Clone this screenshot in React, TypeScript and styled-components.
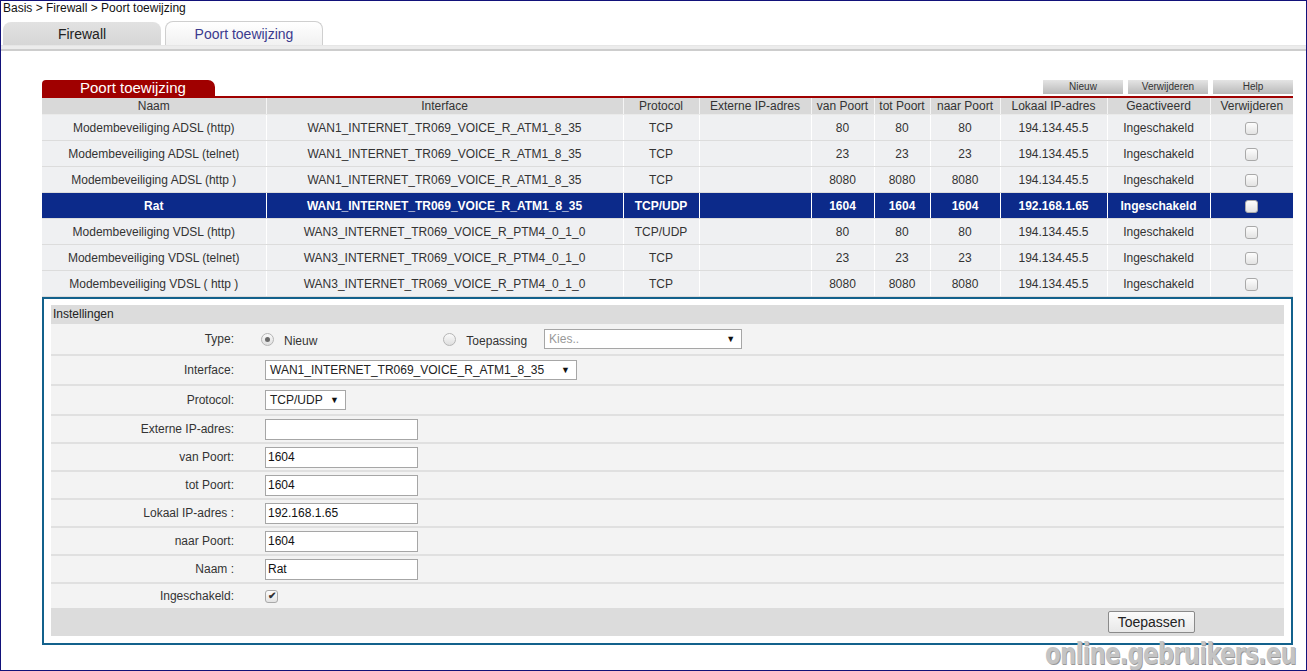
import React from "react";
import styled, { createGlobalStyle } from "styled-components";

const GlobalStyle = createGlobalStyle`
  html, body {
    margin: 0;
    padding: 0;
    background: #fff;
  }
  body {
    font-family: "Liberation Sans", Arial, sans-serif;
    font-size: 12px;
    color: #333;
  }
`;

const Frame = styled.div`
  position: relative;
  width: 1307px;
  height: 671px;
  box-sizing: border-box;
  border: 1px solid #12127a;
  overflow: hidden;
  background: #fff;
`;

const Breadcrumb = styled.div`
  padding: 0 2px;
  height: 15px;
  line-height: 14px;
  font-size: 12px;
  color: #111;
`;

const TabBar = styled.div`
  display: flex;
  align-items: flex-end;
  gap: 4px;
  padding: 4px 0 0 2px;
  height: 25px;
  border-bottom: 1px solid #e6e6e6;
`;

const Tab = styled.div<{ $active?: boolean }>`
  width: 158px;
  height: ${(p) => (p.$active ? "24px" : "23px")};
  box-sizing: border-box;
  display: flex;
  align-items: center;
  justify-content: center;
  font-size: 14px;
  border-radius: 8px 8px 0 0;
  color: ${(p) => (p.$active ? "#3b3b8e" : "#222")};
  background: ${(p) =>
    p.$active
      ? "linear-gradient(#ffffff, #f1f1f1)"
      : "linear-gradient(#e2e2e2, #d6d6d6)"};
  border: ${(p) => (p.$active ? "1px solid #cfcfcf" : "none")};
  border-bottom: none;
`;

const TabLine = styled.div`
  height: 3px;
  background: #ececec;
  border-bottom: 2px solid #cdcdcd;
`;

const Content = styled.div`
  padding: 29px 13px 0 41px;
`;

const TitleRow = styled.div`
  display: flex;
  align-items: flex-end;
  justify-content: space-between;
  border-bottom: 2px solid #a00000;
`;

const TitleTab = styled.div`
  width: 173px;
  height: 16px;
  background: #a00000;
  color: #fff;
  font-size: 15px;
  line-height: 16px;
  border-radius: 4px 7px 0 0;
  padding-left: 38px;
  box-sizing: border-box;
  white-space: nowrap;
`;

const ActionGroup = styled.div`
  display: flex;
  gap: 5px;
  padding-bottom: 2px;
`;

const ActionButton = styled.div`
  width: 80px;
  height: 14px;
  line-height: 14px;
  text-align: center;
  font-size: 10px;
  color: #333;
  background: linear-gradient(#e4e4e4, #b9b9b9);
`;

const Table = styled.table`
  width: 1251px;
  border-collapse: collapse;
  table-layout: fixed;
  font-size: 12px;
`;

const HeadCell = styled.th`
  height: 16px;
  padding: 0;
  font-weight: normal;
  color: #333;
  background: #d9d9d9;
  border-right: 1px solid #f4f4f4;
  border-bottom: 1px solid #eaeaea;
  text-align: center;
  &:last-child {
    border-right: none;
  }
`;

const Row = styled.tr<{ $selected?: boolean }>`
  background: ${(p) => (p.$selected ? "#0c2a8a" : "#eff0f2")};
  color: ${(p) => (p.$selected ? "#fff" : "#333")};
  font-weight: ${(p) => (p.$selected ? "bold" : "normal")};
`;

const Cell = styled.td`
  height: 25px;
  padding: 0;
  text-align: center;
  border-right: 1px solid #fff;
  border-bottom: 1px solid #dcdcdc;
  &:last-child {
    border-right: none;
  }
`;

const Box = styled.span`
  display: inline-flex;
  align-items: center;
  justify-content: center;
  width: 11px;
  height: 11px;
  border: 1px solid #a9a9a9;
  border-radius: 3px;
  background: linear-gradient(#fdfdfd, #e3e3e3);
  vertical-align: middle;
  font-size: 10px;
  line-height: 1;
  color: #333;
  font-weight: bold;
`;

const Settings = styled.div`
  border: 2px solid #13618c;
  padding: 6px 7px 7px 7px;
`;

const SettingsHeader = styled.div`
  height: 19px;
  line-height: 19px;
  padding-left: 2px;
  background: #dcdcdc;
  color: #222;
`;

const FormRow = styled.div<{ $h: number }>`
  display: grid;
  grid-template-columns: 183px 1fr;
  column-gap: 31px;
  align-items: center;
  box-sizing: border-box;
  height: ${(p) => p.$h}px;
  background: #f3f3f3;
  & + & {
    border-top: 2px solid #e0e0e0;
  }
`;

const Label = styled.div`
  text-align: right;
  color: #333;
`;

const Field = styled.div`
  display: flex;
  align-items: center;
`;

const Radio = styled.span<{ $checked?: boolean }>`
  display: inline-flex;
  align-items: center;
  justify-content: center;
  width: 11px;
  height: 11px;
  border-radius: 50%;
  border: 1px solid #b5b5b5;
  background: linear-gradient(#fafafa, #dedede);
  margin: 0 10px 0 -4px;
  &::after {
    content: "";
    width: 5px;
    height: 5px;
    border-radius: 50%;
    background: ${(p) => (p.$checked ? "#6a6a6a" : "transparent")};
  }
`;

const RadioText = styled.span<{ $gap?: number }>`
  margin-right: ${(p) => p.$gap ?? 0}px;
  padding-top: 3px;
`;

const Select = styled.div<{ $w: number; $muted?: boolean }>`
  display: flex;
  align-items: center;
  justify-content: space-between;
  box-sizing: border-box;
  width: ${(p) => p.$w}px;
  height: 20px;
  padding: 0 6px 0 4px;
  background: #fff;
  border: 1px solid #a6a6a6;
  color: ${(p) => (p.$muted ? "#999" : "#222")};
`;

const Arrow = styled.span`
  font-size: 9px;
  color: #111;
`;

const TextInput = styled.div`
  box-sizing: border-box;
  width: 153px;
  height: 21px;
  line-height: 19px;
  padding: 0 2px;
  background: #fff;
  border: 1px solid #a6a6a6;
  color: #111;
`;

const Footer = styled.div`
  display: flex;
  justify-content: flex-end;
  align-items: center;
  height: 28px;
  padding-right: 89px;
  background: #dcdcdc;
`;

const ApplyButton = styled.button`
  width: 87px;
  height: 22px;
  padding: 0;
  font-family: "Liberation Sans", Arial, sans-serif;
  font-size: 14px;
  color: #222;
  background: linear-gradient(#fbfbfb, #e8e8e8);
  border: 1px solid #8a8a8a;
  border-radius: 2px;
`;

const Watermark = styled.div`
  position: absolute;
  right: 10px;
  bottom: 4px;
  font-family: "DejaVu Sans Condensed", "DejaVu Sans", sans-serif;
  font-weight: bold;
  font-size: 31px;
  line-height: 26px;
  letter-spacing: -1px;
  color: #c4c4c4;
  text-shadow: 1px 1px 0 #9a9a9a;
  transform: scaleX(0.82);
  transform-origin: right bottom;
`;

const columns: [string, number][] = [
  ["Naam", 224],
  ["Interface", 357],
  ["Protocol", 76],
  ["Externe IP-adres", 112],
  ["van Poort", 63],
  ["tot Poort", 56],
  ["naar Poort", 70],
  ["Lokaal IP-adres", 107],
  ["Geactiveerd", 103],
  ["Verwijderen", 83],
];

type Rule = {
  name: string;
  iface: string;
  proto: string;
  from: string;
  to: string;
  dest: string;
  ip: string;
  selected?: boolean;
};

const rules: Rule[] = [
  { name: "Modembeveiliging ADSL (http)", iface: "WAN1_INTERNET_TR069_VOICE_R_ATM1_8_35", proto: "TCP", from: "80", to: "80", dest: "80", ip: "194.134.45.5" },
  { name: "Modembeveiliging ADSL (telnet)", iface: "WAN1_INTERNET_TR069_VOICE_R_ATM1_8_35", proto: "TCP", from: "23", to: "23", dest: "23", ip: "194.134.45.5" },
  { name: "Modembeveiliging ADSL (http )", iface: "WAN1_INTERNET_TR069_VOICE_R_ATM1_8_35", proto: "TCP", from: "8080", to: "8080", dest: "8080", ip: "194.134.45.5" },
  { name: "Rat", iface: "WAN1_INTERNET_TR069_VOICE_R_ATM1_8_35", proto: "TCP/UDP", from: "1604", to: "1604", dest: "1604", ip: "192.168.1.65", selected: true },
  { name: "Modembeveiliging VDSL (http)", iface: "WAN3_INTERNET_TR069_VOICE_R_PTM4_0_1_0", proto: "TCP/UDP", from: "80", to: "80", dest: "80", ip: "194.134.45.5" },
  { name: "Modembeveiliging VDSL (telnet)", iface: "WAN3_INTERNET_TR069_VOICE_R_PTM4_0_1_0", proto: "TCP", from: "23", to: "23", dest: "23", ip: "194.134.45.5" },
  { name: "Modembeveiliging VDSL ( http )", iface: "WAN3_INTERNET_TR069_VOICE_R_PTM4_0_1_0", proto: "TCP", from: "8080", to: "8080", dest: "8080", ip: "194.134.45.5" },
];

const textFields: [string, string][] = [
  ["Externe IP-adres:", ""],
  ["van Poort:", "1604"],
  ["tot Poort:", "1604"],
  ["Lokaal IP-adres :", "192.168.1.65"],
  ["naar Poort:", "1604"],
  ["Naam :", "Rat"],
];

const App = () => {
  return (
    <Frame>
      <GlobalStyle />
      <Breadcrumb>Basis &gt; Firewall &gt; Poort toewijzing</Breadcrumb>
      <TabBar>
        <Tab>Firewall</Tab>
        <Tab $active>Poort toewijzing</Tab>
      </TabBar>
      <TabLine />

      <Content>
        <TitleRow>
          <TitleTab>Poort toewijzing</TitleTab>
          <ActionGroup>
            <ActionButton>Nieuw</ActionButton>
            <ActionButton>Verwijderen</ActionButton>
            <ActionButton>Help</ActionButton>
          </ActionGroup>
        </TitleRow>

        <Table>
          <colgroup>
            {columns.map(([name, w]) => (
              <col key={name} style={{ width: w }} />
            ))}
          </colgroup>
          <thead>
            <tr>
              {columns.map(([name]) => (
                <HeadCell key={name}>{name}</HeadCell>
              ))}
            </tr>
          </thead>
          <tbody>
            {rules.map((r) => (
              <Row key={r.name} $selected={r.selected}>
                <Cell>{r.name}</Cell>
                <Cell>{r.iface}</Cell>
                <Cell>{r.proto}</Cell>
                <Cell></Cell>
                <Cell>{r.from}</Cell>
                <Cell>{r.to}</Cell>
                <Cell>{r.dest}</Cell>
                <Cell>{r.ip}</Cell>
                <Cell>Ingeschakeld</Cell>
                <Cell>
                  <Box />
                </Cell>
              </Row>
            ))}
          </tbody>
        </Table>

        <Settings>
          <SettingsHeader>Instellingen</SettingsHeader>
          <FormRow $h={30}>
            <Label>Type:</Label>
            <Field>
              <Radio $checked />
              <RadioText $gap={130}>Nieuw</RadioText>
              <Radio />
              <RadioText $gap={17}>Toepassing</RadioText>
              <Select $w={198} $muted>
                <span>Kies..</span>
                <Arrow>▼</Arrow>
              </Select>
            </Field>
          </FormRow>
          <FormRow $h={30}>
            <Label>Interface:</Label>
            <Field>
              <Select $w={312}>
                <span>WAN1_INTERNET_TR069_VOICE_R_ATM1_8_35</span>
                <Arrow>▼</Arrow>
              </Select>
            </Field>
          </FormRow>
          <FormRow $h={30}>
            <Label>Protocol:</Label>
            <Field>
              <Select $w={81}>
                <span>TCP/UDP</span>
                <Arrow>▼</Arrow>
              </Select>
            </Field>
          </FormRow>
          {textFields.map(([label, value]) => (
            <FormRow key={label} $h={28}>
              <Label>{label}</Label>
              <Field>
                <TextInput>{value}</TextInput>
              </Field>
            </FormRow>
          ))}
          <FormRow $h={26}>
            <Label>Ingeschakeld:</Label>
            <Field>
              <Box>✔</Box>
            </Field>
          </FormRow>
          <Footer>
            <ApplyButton>Toepassen</ApplyButton>
          </Footer>
        </Settings>
      </Content>

      <Watermark>online.gebruikers.eu</Watermark>
    </Frame>
  );
};

export default App;
